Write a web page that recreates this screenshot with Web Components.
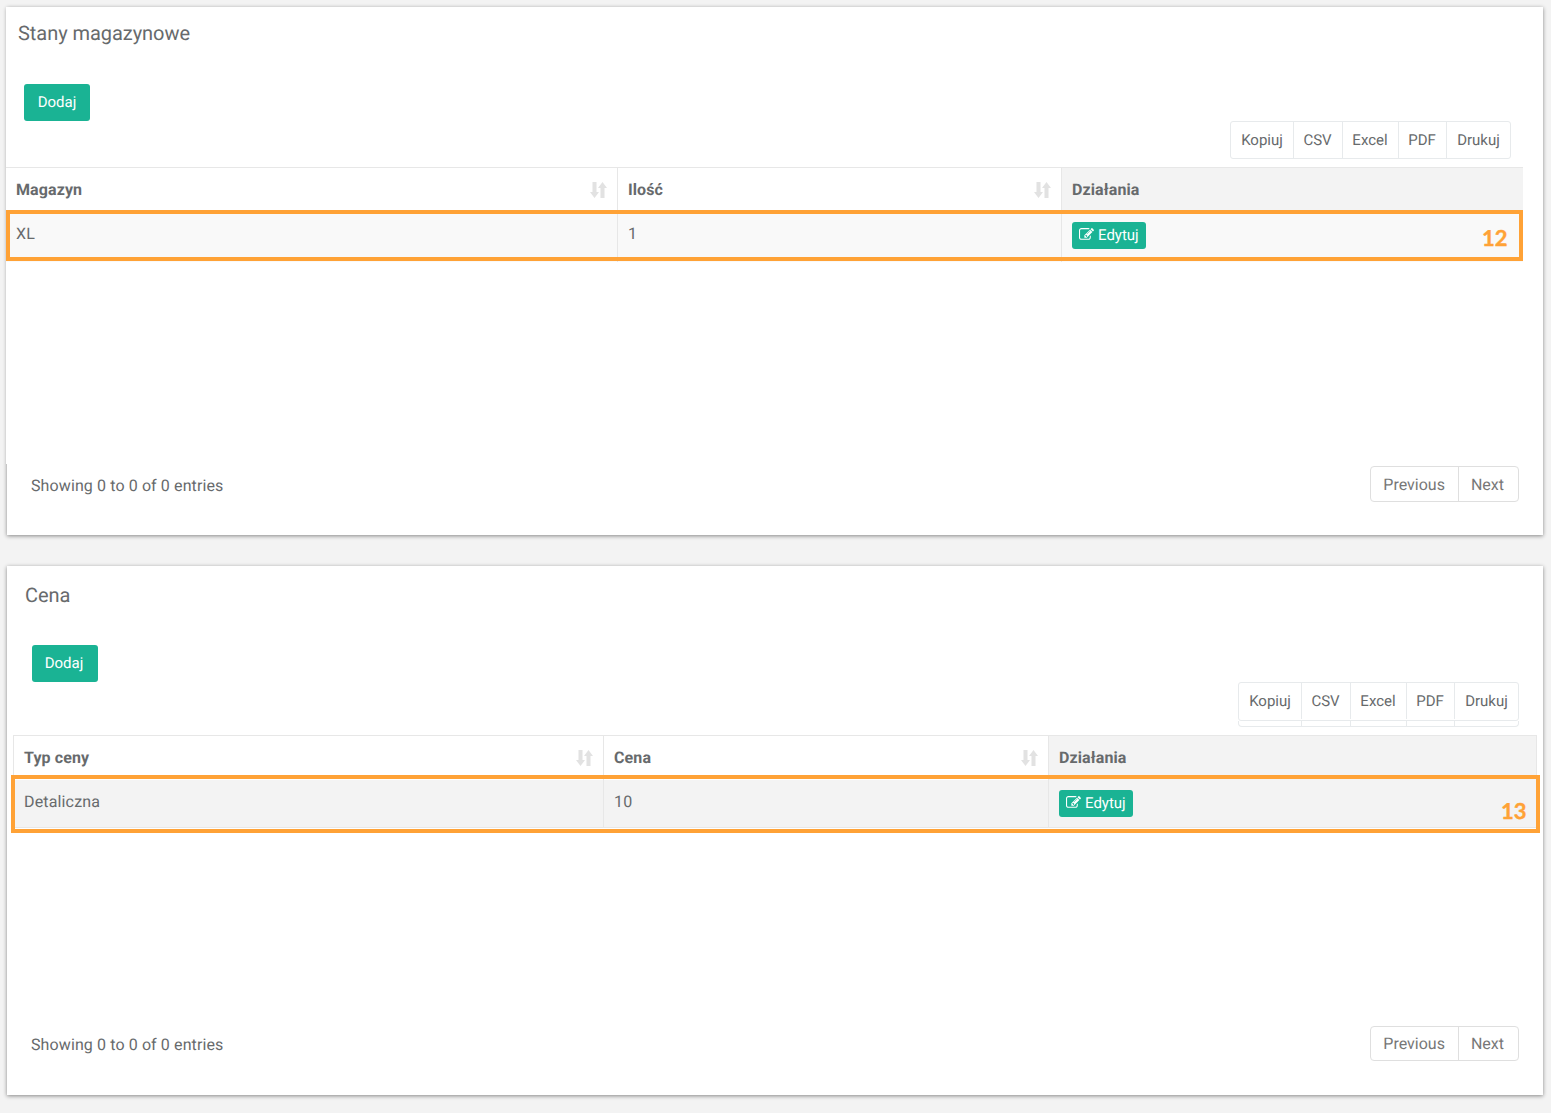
<!DOCTYPE html>
<html lang="pl">
<head>
<meta charset="utf-8">
<title>Stany magazynowe</title>
<style>
    html, body { margin: 0; background: #f3f3f3; }
    body {
        position: relative;
        height: 1113px;
        overflow: hidden;
        font-family: Roboto, "Liberation Sans", sans-serif;
        font-size: 16px;
        color: #676a6c;
        text-rendering: geometricPrecision;
    }
    .page { display: flex; flex-direction: column; gap: 31px; padding: 7px 8px 0 7px; }
    #stock {
        --panel-height: 528px; --title-top: 14px; --title-x: 11px; --add-x: 17px;
        --add-top: 39px; --tools-right: 32px; --table-top: 8px; --table-left: -1px;
        --table-right: 20px; --tools-height: 38px; --bleed: 1px; --bottom: 33px;
    }
    #price {
        --panel-height: 529px; --title-top: 17px; --title-x: 18px; --add-x: 25px;
        --add-top: 38px; --tools-right: 24px; --table-top: 14px; --table-left: 6px;
        --table-right: 6px; --tools-height: 39px; --bleed: 0px; --bottom: 34px;
        --add-nudge: 2px;
    }
</style>
</head>
<body>

<template id="panel-template">
    <style>
        :host {
            display: flex;
            flex-direction: column;
            height: var(--panel-height);
            background: #fff;
            box-shadow: 0 1px 4px rgba(0, 0, 0, 0.45);
        }
        .body {
            flex: 1;
            display: flex;
            flex-direction: column;
            min-height: 0;
            margin-left: calc(0px - var(--bleed));
            padding-left: var(--bleed);
            background: #fff;
        }
        h2 {
            margin: var(--title-top) 0 0 var(--title-x);
            font-size: 20px;
            line-height: 24px;
            font-weight: 400;
            letter-spacing: -0.05px;
        }
        .add { margin: var(--add-top) 0 0 var(--add-x); }
        .tools {
            display: flex;
            justify-content: flex-end;
            height: var(--tools-height);
            padding-right: var(--tools-right);
        }
        .table {
            display: block;
            margin: var(--table-top) var(--table-right) 0 var(--table-left);
        }
        .foot { display: block; flex: none; padding: 2px 24px var(--bottom); }
    </style>
    <div class="body">
        <h2></h2>
        <div class="add"><slot name="add"></slot></div>
        <div class="tools"><slot name="tools"></slot></div>
        <div class="table"><slot name="table"></slot></div>
    </div>
    <div class="foot"><slot name="foot"></slot></div>
</template>

<template id="add-button-template">
    <style>
        :host { display: inline-block; }
        button {
            display: block;
            width: 66px;
            height: 37px;
            padding: 0 var(--add-nudge, 0px) 2px 0;
            border: 0;
            border-radius: 3px;
            background: #1ab394;
            color: #fff;
            font: 400 15px Roboto, sans-serif;
            text-rendering: geometricPrecision;
        }
    </style>
    <button><slot></slot></button>
</template>

<template id="export-tools-template">
    <style>
        :host { display: block; position: relative; height: 38px; }
        .row {
            display: flex;
            height: 38px;
            box-sizing: border-box;
            border: 1px solid #e7eaec;
            border-radius: 3px;
            background: #fff;
        }
        :host([ghost]) .row { height: 39px; padding-bottom: 1px; }
        span {
            display: flex;
            align-items: center;
            justify-content: center;
            box-sizing: border-box;
            color: #676a6c;
            font-size: 15px;
            border-left: 1px solid #e7eaec;
        }
        span:first-child { border-left: 0; }
        .w1 { width: 62px; }
        .w2 { width: 49px; padding-right: 1px; }
        .w3 { width: 56px; padding-right: 1px; }
        .w4 { width: 48px; padding-right: 1px; }
        .w5 { width: 64px; }
        .row.ghost { display: none; }
        :host([ghost]) .row.ghost {
            display: flex;
            position: absolute;
            left: 0;
            right: 0;
            top: 39px;
            height: 6px;
            padding-bottom: 0;
            border-top: 0;
            border-radius: 0 0 4px 4px;
        }
    </style>
    <div class="row">
        <span class="w1">Kopiuj</span><span class="w2">CSV</span><span class="w3">Excel</span><span class="w4">PDF</span><span class="w5">Drukuj</span>
    </div>
    <div class="row ghost">
        <span class="w1"></span><span class="w2"></span><span class="w3"></span><span class="w4"></span><span class="w5"></span>
    </div>
</template>

<template id="sort-icon-template">
    <style>
        :host { display: block; position: absolute; right: 10px; top: 50%; margin-top: -8px; width: 17px; height: 16px; }
        svg { display: block; width: 17px; height: 16px; fill: #e2e2e2; }
    </style>
    <svg viewBox="0 0 17 16"><path d="M2.500 0h4v10h2.500L4.500 16 0 10h2.500zM10.500 16h4V6H17L12.500 0 8 6h2.500z"/></svg>
</template>

<template id="edit-button-template">
    <style>
        :host { display: inline-block; vertical-align: top; letter-spacing: 0; }
        a {
            display: flex;
            align-items: center;
            gap: 4px;
            box-sizing: border-box;
            width: 74px;
            height: 27px;
            padding: 0 0 2px 7px;
            border-radius: 3px;
            background: #1ab394;
            color: #fff;
            font-size: 15px;
        }
        svg { display: block; width: 15px; height: 15px; fill: #fff; }
    </style>
    <a>
        <svg viewBox="0 0 1792 1792"><path d="M888 1184l116-116-152-152-116 116v56h96v96h56zm440-720q-16-16-33 1l-350 350q-17 17-1 33t33-1l350-350q17-17 1-33zm80 594v190q0 119-84.500 203.500t-203.500 84.500h-832q-119 0-203.500-84.500t-84.500-203.500v-832q0-119 84.500-203.500t203.500-84.500h832q63 0 117 25 15 7 18 23 3 17-9 29l-49 49q-14 14-32 8-23-6-45-6h-832q-66 0-113 47t-47 113v832q0 66 47 113t113 47h832q66 0 113-47t47-113v-126q0-13 9-22l64-64q15-15 35-7t20 29zm-96-738l288 288-672 672h-288v-288zm444 132l-92 92-288-288 92-92q28-28 68-28t68 28l152 152q28 28 28 68t-28 68z"/></svg>
        <slot></slot>
    </a>
</template>

<template id="pager-template">
    <style>
        :host { display: flex; align-items: center; justify-content: space-between; }
        .label { padding-top: 2px; letter-spacing: 0.11px; }
        .pages {
            display: flex;
            height: var(--pager-height, 36px);
            box-sizing: border-box;
            border: 1px solid #dfdfdf;
            border-radius: 4px;
            color: #777;
        }
        .pages span { display: flex; align-items: center; padding: 0 13px 0 12px; }
        .pages span + span { padding: 0 14px 0 12px; border-left: 1px solid #dfdfdf; }
    </style>
    <div class="label"><slot></slot></div>
    <div class="pages"><span>Previous</span><span>Next</span></div>
</template>

<template id="mark-template">
    <style>
        :host {
            display: block;
            position: absolute;
            box-sizing: border-box;
            border: 4px solid #ffa236;
            pointer-events: none;
        }
        span {
            position: absolute;
            color: #ffa236;
            font: 700 22px/22px Lato, sans-serif;
            -webkit-text-stroke: 0.4px #ffa236;
        }
    </style>
    <span><slot></slot></span>
</template>

<div class="page">
    <stock-panel id="stock" heading="Stany magazynowe">
        <add-button slot="add">Dodaj</add-button>
        <export-tools slot="tools"></export-tools>
        <data-table slot="table" columns="611,444,462" first="Magazyn" second="Ilość" third="Działania" v1="XL" v2="1" head-height="44" row-height="50" row-bg="#f9f9f9"></data-table>
        <table-pager slot="foot">Showing 0 to 0 of 0 entries</table-pager>
    </stock-panel>
    <stock-panel id="price" heading="Cena">
        <add-button slot="add">Dodaj</add-button>
        <export-tools slot="tools" ghost></export-tools>
        <data-table slot="table" columns="589,445,488" first="Typ ceny" second="Cena" third="Działania" v1="Detaliczna" v2="10" head-height="44" row-height="48" row-bg="#f3f3f3" boxed></data-table>
        <table-pager slot="foot" style="--pager-height:35px">Showing 0 to 0 of 0 entries</table-pager>
    </stock-panel>
</div>

<row-mark style="left:6px;top:210px;width:1517px;height:51px" num-x="1472" num-y="13">12</row-mark>
<row-mark style="left:11px;top:775px;width:1529px;height:58px" num-x="1486" num-y="21">13</row-mark>

<script>
    function fromTemplate(el, id) {
        const root = el.attachShadow({ mode: "open" });
        root.appendChild(document.getElementById(id).content.cloneNode(true));
        return root;
    }

    class StockPanel extends HTMLElement {
        constructor() {
            super();
            this.shadowDOM = fromTemplate(this, "panel-template");
        }
        connectedCallback() {
            this.shadowDOM.querySelector("h2").textContent = this.getAttribute("heading");
        }
    }

    class AddButton extends HTMLElement {
        constructor() { super(); fromTemplate(this, "add-button-template"); }
    }

    class ExportTools extends HTMLElement {
        constructor() { super(); fromTemplate(this, "export-tools-template"); }
    }

    class SortIcon extends HTMLElement {
        constructor() { super(); fromTemplate(this, "sort-icon-template"); }
    }

    class EditButton extends HTMLElement {
        constructor() { super(); fromTemplate(this, "edit-button-template"); }
    }

    class TablePager extends HTMLElement {
        constructor() { super(); fromTemplate(this, "pager-template"); }
    }

    class RowMark extends HTMLElement {
        constructor() {
            super();
            this.shadowDOM = fromTemplate(this, "mark-template");
        }
        connectedCallback() {
            const num = this.shadowDOM.querySelector("span");
            num.style.left = this.getAttribute("num-x") + "px";
            num.style.top = this.getAttribute("num-y") + "px";
        }
    }

    class DataTable extends HTMLElement {
        constructor() {
            super();
            this.shadowDOM = this.attachShadow({ mode: "open" });
        }
        connectedCallback() {
            const [a, b, c] = this.getAttribute("columns").split(",");
            const attr = (name) => this.getAttribute(name);
            this.shadowDOM.innerHTML = `
            <style>
                :host { display: block; }
                table {
                    width: 100%;
                    table-layout: fixed;
                    border-collapse: separate;
                    border-spacing: 0;
                    border-top: 1px solid #e7e7e7;
                }
                :host([boxed]) table { border-left: 1px solid #e7e7e7; border-right: 1px solid #e7e7e7; }
                th, td { box-sizing: border-box; padding: 10px; vertical-align: top; line-height: 24px; }
                th {
                    position: relative;
                    height: ${attr("head-height")}px;
                    text-align: left;
                    font-weight: 700;
                    letter-spacing: 0.1px;
                }
                td { height: ${attr("row-height")}px; background: ${attr("row-bg")}; letter-spacing: 0.15px; }
                th + th, td + td { border-left: 1px solid #e7e7e7; }
                :host([boxed]) td { border-bottom: 1px solid #e7e7e7; }
                .grey { background: #f3f3f3; }
            </style>
            <table>
                <colgroup><col style="width:${a}px"><col style="width:${b}px"><col style="width:${c}px"></colgroup>
                <tr>
                    <th>${attr("first")}<sort-icon></sort-icon></th>
                    <th>${attr("second")}<sort-icon></sort-icon></th>
                    <th class="grey">${attr("third")}</th>
                </tr>
                <tr>
                    <td>${attr("v1")}</td>
                    <td>${attr("v2")}</td>
                    <td><edit-button>Edytuj</edit-button></td>
                </tr>
            </table>`;
        }
    }

    customElements.define("stock-panel", StockPanel);
    customElements.define("add-button", AddButton);
    customElements.define("export-tools", ExportTools);
    customElements.define("sort-icon", SortIcon);
    customElements.define("edit-button", EditButton);
    customElements.define("table-pager", TablePager);
    customElements.define("row-mark", RowMark);
    customElements.define("data-table", DataTable);
</script>
</body>
</html>
